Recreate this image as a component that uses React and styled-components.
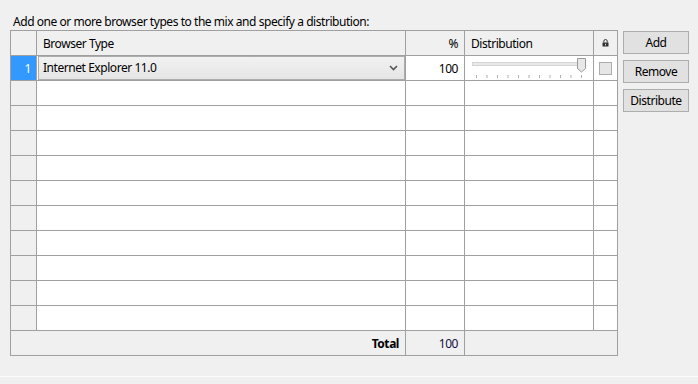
import React from 'react'
import styled, {createGlobalStyle} from 'styled-components'

const GlobalStyle = createGlobalStyle`
  html, body {
    margin: 0;
    padding: 0;
    background: #f0f0f0;
  }
  body {
    font-family: "Noto Sans", "Open Sans", sans-serif;
    font-size: 12px;
    letter-spacing: -0.45px;
    color: #000;
  }
`

const COLS = '25px 368px 58px 128px 23px'
const ROWS = 11

const App = () => {
  const empty = []
  for (let i = 1; i < ROWS; i++) empty.push(i)

  return (
    <>
      <GlobalStyle />
      <Page>
        <Main>
          <Left>
            <Title>Add one or more browser types to the mix and specify a distribution:</Title>
            <Grid>
              <HeadCell />
              <HeadCell>Browser Type</HeadCell>
              <HeadCell align="right">%</HeadCell>
              <HeadCell>Distribution</HeadCell>
              <HeadCell align="center"><LockIcon /></HeadCell>

              <RowNum selected>1</RowNum>
              <Cell>
                <Select>
                  <span>Internet Explorer 11.0</span>
                  <Chevron />
                </Select>
              </Cell>
              <Cell align="right">100</Cell>
              <Cell><Slider /></Cell>
              <Cell align="center"><Check /></Cell>

              {empty.map(i => (
                <React.Fragment key={i}>
                  <RowNum />
                  <Cell />
                  <Cell />
                  <Cell />
                  <Cell />
                </React.Fragment>
              ))}

              <FootCell span={2} align="right" bold>Total</FootCell>
              <FootCell align="right" total>100</FootCell>
              <FootCell span={2} />
            </Grid>
          </Left>
          <Buttons>
            <Button>Add</Button>
            <Button>Remove</Button>
            <Button>Distribute</Button>
          </Buttons>
        </Main>
        <StatusLine />
      </Page>
    </>
  )
}

export default App

const LockIcon = () => (
  <svg width="7" height="8" viewBox="0 0 7 8">
    <path d="M1.8 3.5 V2.2 A1.7 1.7 0 0 1 5.2 2.2 V3.5" fill="none" stroke="#333" strokeWidth="1" />
    <rect x="0.5" y="3.5" width="6" height="4" fill="#333" />
    <rect x="3" y="4.8" width="1" height="1.6" fill="#ddd" />
  </svg>
)

const Chevron = () => (
  <svg width="9" height="6" viewBox="0 0 9 6">
    <path d="M1 1 L4.5 4.5 L8 1" fill="none" stroke="#555" strokeWidth="1.6" />
  </svg>
)

const Slider = () => {
  const ticks = []
  for (let i = 0; i <= 10; i++) ticks.push(11.5 + i * 10.5)
  return (
    <svg width="128" height="24" viewBox="0 0 128 24">
      <rect x="7.5" y="6.5" width="111" height="3" fill="#e7eaea" stroke="#d6d6d6" />
      {ticks.map((x, i) => (
        <line key={i} x1={x} y1="19" x2={x} y2="22" stroke="#b0b0b0" strokeWidth="1" />
      ))}
      <path d="M112.5 2.5 H120.5 V12.5 L116.5 16 L112.5 12.5 Z" fill="#e8e8e8" stroke="#999" />
    </svg>
  )
}

const Page = styled.div`
  display: flex;
  flex-direction: column;
  height: 384px;
  overflow: hidden;
`

const Main = styled.div`
  display: flex;
  align-items: flex-start;
  gap: 5px;
  padding-left: 10px;
  height: 376px;
`

const Left = styled.div`
  display: flex;
  flex-direction: column;
`

const Title = styled.div`
  height: 17px;
  padding-top: 13px;
  padding-left: 3px;
  line-height: 17px;
  white-space: nowrap;
  overflow: hidden;
`

const Grid = styled.div`
  display: grid;
  grid-template-columns: ${COLS};
  grid-auto-rows: 24px;
  gap: 1px;
  background: #a0a0a0;
  border: 1px solid #a0a0a0;
  width: 606px;
`

const Cell = styled.div`
  background: #fff;
  display: flex;
  align-items: center;
  justify-content: ${p => p.align === 'right' ? 'flex-end' : p.align === 'center' ? 'center' : 'flex-start'};
  padding: ${p => p.align === 'right' ? '0 6px 0 0' : '0'};
  white-space: nowrap;
  overflow: hidden;
`

const HeadCell = styled(Cell)`
  background: #f0f0f0;
  padding: ${p => p.align === 'right' ? '0 6px 0 0' : p.align === 'center' ? '0' : '0 0 0 6px'};
`

const RowNum = styled(Cell)`
  background: ${p => p.selected ? '#3399ff' : '#f0f0f0'};
  color: #fff;
  justify-content: flex-end;
  padding-right: 5px;
`

const FootCell = styled(Cell)`
  background: #f0f0f0;
  grid-column: span ${p => p.span || 1};
  font-weight: ${p => p.bold ? 700 : 400};
  color: ${p => p.total ? '#101040' : '#000'};
`

const Select = styled.div`
  flex: 1;
  align-self: stretch;
  margin: 0 0 0 1px;
  border: 1px solid #acacac;
  background: linear-gradient(#f2f2f2, #e5e5e5);
  display: flex;
  align-items: center;
  justify-content: space-between;
  padding: 0 6px 0 4px;

  span {
    line-height: 1;
  }
`

const Check = styled.div`
  width: 11px;
  height: 11px;
  border: 1px solid #adadad;
  background: #e6e6e6;
`

const Buttons = styled.div`
  display: flex;
  flex-direction: column;
  gap: 6px;
  padding-top: 31px;
`

const Button = styled.button`
  width: 66px;
  height: 23px;
  padding: 0;
  font-family: inherit;
  font-size: 12px;
  letter-spacing: inherit;
  color: #000;
  background: #e1e1e1;
  border: 1px solid #adadad;
  border-radius: 0;
`

const StatusLine = styled.div`
  border-top: 1px solid #fbfbfb;
  flex: 1;
`
